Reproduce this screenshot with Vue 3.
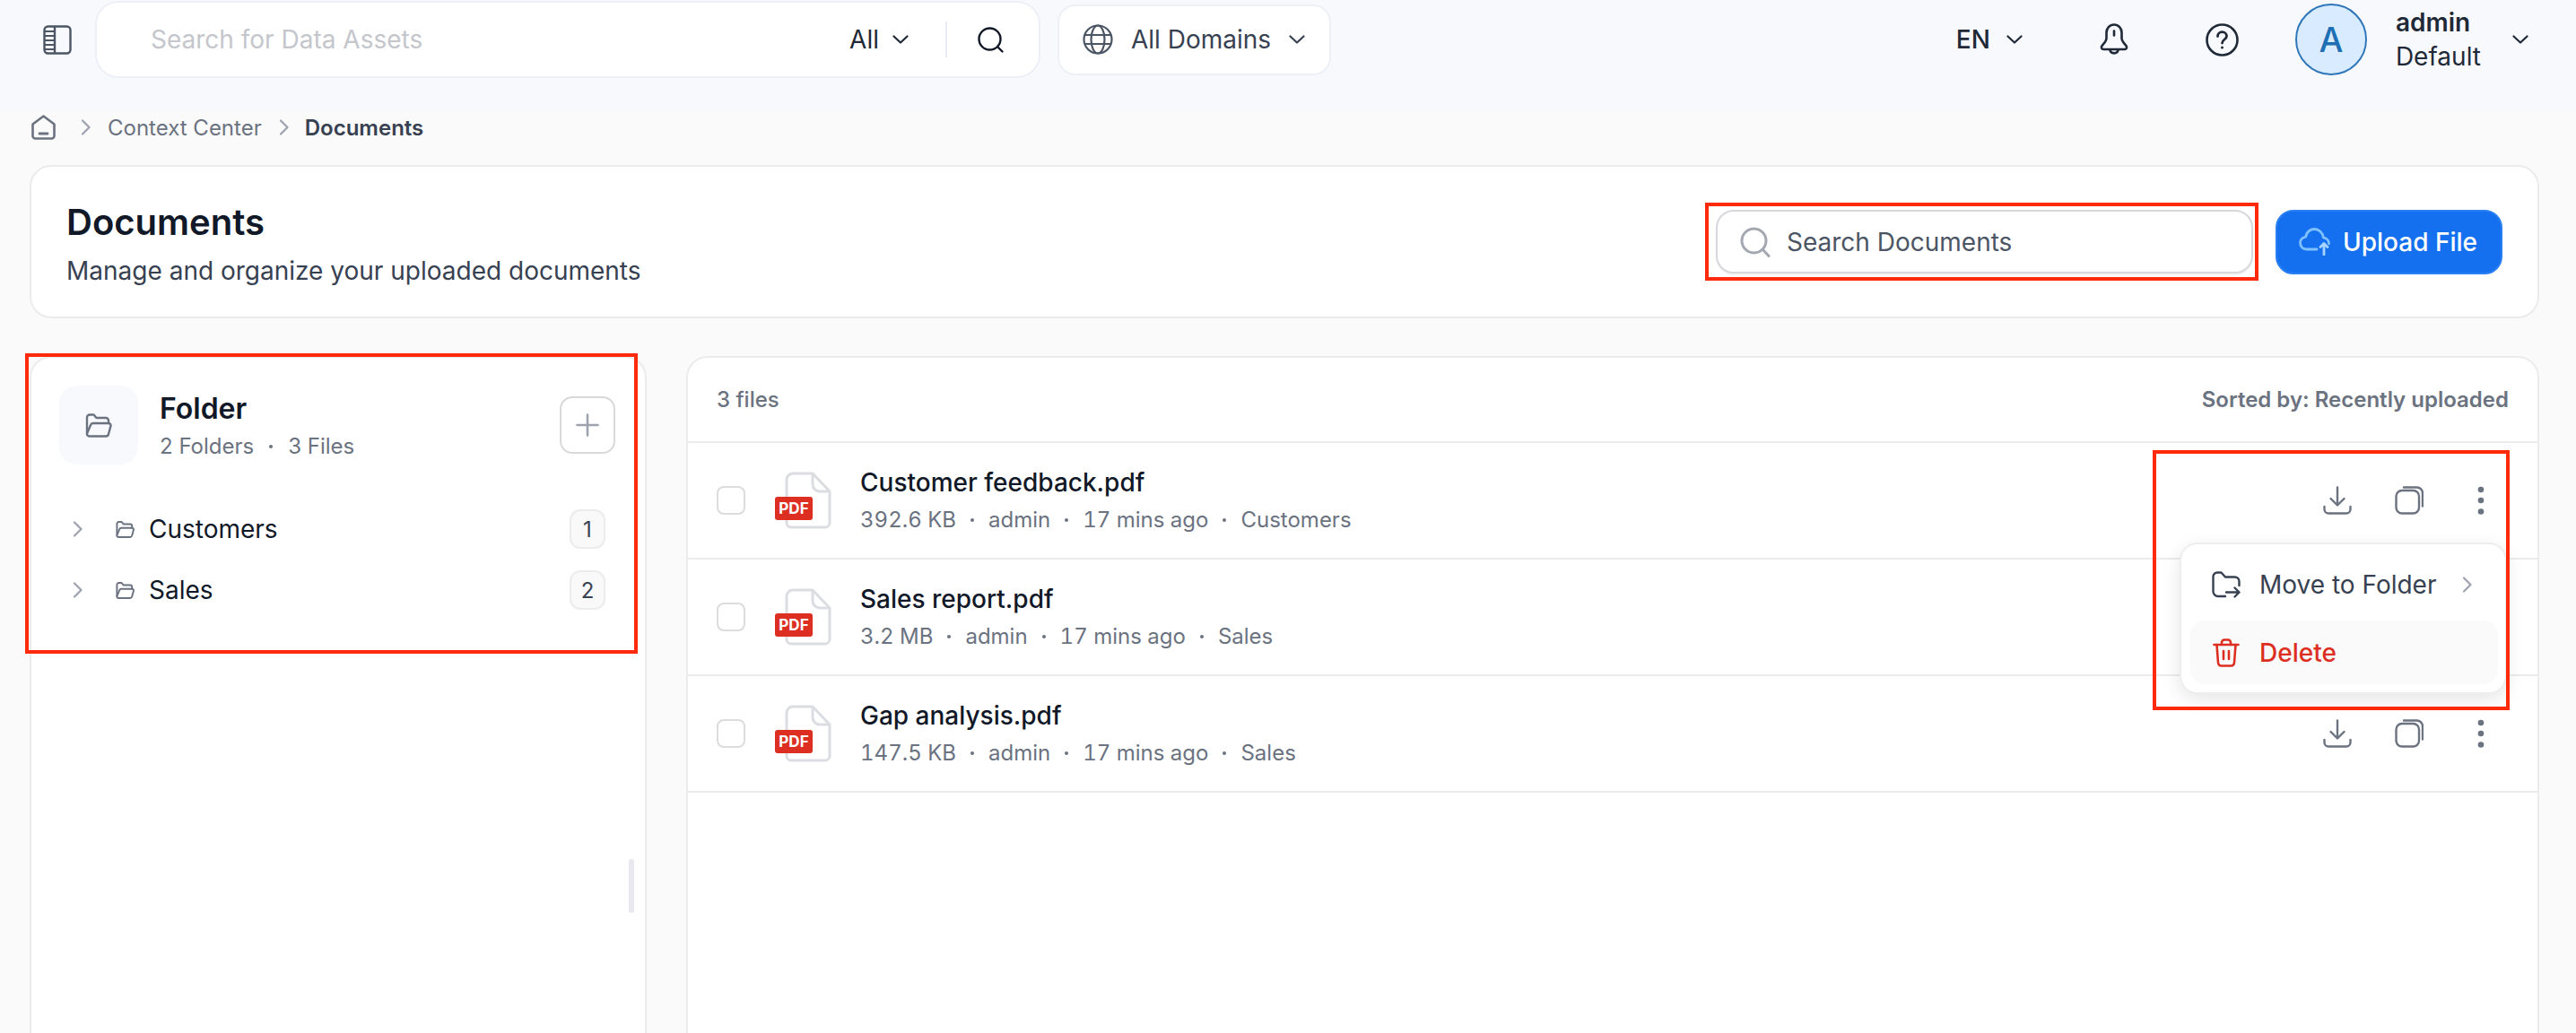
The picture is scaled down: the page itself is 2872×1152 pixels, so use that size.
<script setup>
import { ref } from 'vue';

const folders = ref([
  { name: 'Customers', count: 1 },
  { name: 'Sales', count: 2 }
]);

const files = ref([
  { name: 'Customer feedback.pdf', meta: ['392.6 KB', 'admin', '17 mins ago', 'Customers'] },
  { name: 'Sales report.pdf', meta: ['3.2 MB', 'admin', '17 mins ago', 'Sales'] },
  { name: 'Gap analysis.pdf', meta: ['147.5 KB', 'admin', '17 mins ago', 'Sales'] }
]);
</script>

<template>
  <div class="page">
    <!-- top bar -->
    <header class="topbar">
      <svg class="ic-sidebar" width="32" height="33" viewBox="0 0 32 33" fill="none" stroke="#4b5563" stroke-width="2.4">
        <rect x="1.5" y="1.5" width="29" height="30" rx="4" />
        <path d="M13 2v29" />
        <path d="M2 7h10M2 12h10M2 17h10M2 22h10M2 27h10" stroke-width="1.8" />
      </svg>

      <div class="global-search">
        <span class="global-placeholder">Search for Data Assets</span>
        <span class="scope">All</span>
        <svg class="chev-all" width="18" height="10" viewBox="0 0 18 10" fill="none" stroke="#1f2937" stroke-width="2.2" stroke-linecap="round" stroke-linejoin="round"><path d="M1.5 1.5 9 8.5l7.5-7" /></svg>
        <i class="divider"></i>
        <svg class="ic-search" width="29" height="29" viewBox="0 0 29 29" fill="none" stroke="#111827" stroke-width="2.4" stroke-linecap="round"><circle cx="13.5" cy="13.5" r="12" /><path d="m23 23 4.5 4.5" /></svg>
      </div>

      <div class="domains">
        <svg width="34" height="34" viewBox="0 0 34 34" fill="none" stroke="#4b5563" stroke-width="2.2">
          <circle cx="17" cy="17" r="15.5" />
          <ellipse cx="17" cy="17" rx="7.5" ry="15.5" />
          <path d="M2.5 12h29M2.5 22h29" />
        </svg>
        <span>All Domains</span>
        <svg width="18" height="10" viewBox="0 0 18 10" fill="none" stroke="#374151" stroke-width="2.2" stroke-linecap="round" stroke-linejoin="round"><path d="M1.5 1.5 9 8.5l7.5-7" /></svg>
      </div>

      <div class="top-right">
        <span class="lang">EN</span>
        <svg class="chev-lang" width="18" height="10" viewBox="0 0 18 10" fill="none" stroke="#1f2937" stroke-width="2.2" stroke-linecap="round" stroke-linejoin="round"><path d="M1.5 1.5 9 8.5l7.5-7" /></svg>
        <svg class="ic-bell" width="32" height="36" viewBox="0 0 32 36" fill="none" stroke="#1f2937" stroke-width="2.6" stroke-linecap="round" stroke-linejoin="round">
          <path d="M16 1.500c-5 0-8.500 4-8.500 9v6c0 3.500-2.500 5.500-5 8.500-1.300 1.700-.3 4 1.700 4h23.600c2 0 3-2.300 1.700-4-2.500-3-5-5-5-8.500v-6c0-5-3.500-9-8.500-9z" />
          <path d="M16 8.500v5" />
          <path d="M11.500 30c1 4.500 8 4.500 9 0" />
        </svg>
        <svg class="ic-help" width="37" height="37" viewBox="0 0 37 37" fill="none" stroke="#1f2937" stroke-width="2.6" stroke-linecap="round">
          <circle cx="18.500" cy="18.500" r="17" />
          <path d="M13.500 14.500c0-3 2.200-4.800 5-4.800s5 1.800 5 4.500c0 3.800-5 3.800-5 7.800" stroke-width="2.8" />
          <circle cx="18.500" cy="27" r="1.500" fill="#1f2937" stroke="none" />
        </svg>
        <div class="avatar">A</div>
        <div class="user">
          <span class="user-name">admin</span>
          <span class="user-org">Default</span>
        </div>
        <svg width="18" height="10" viewBox="0 0 18 10" fill="none" stroke="#1f2937" stroke-width="2.2" stroke-linecap="round" stroke-linejoin="round"><path d="M1.5 1.5 9 8.5l7.5-7" /></svg>
      </div>
    </header>

    <!-- breadcrumb -->
    <nav class="crumbs">
      <svg width="27" height="28" viewBox="0 0 27 28" fill="none" stroke="#6b7280" stroke-width="2.6" stroke-linecap="round" stroke-linejoin="round">
        <path d="M13.500 1.500 25.500 10.500V23.500a3 3 0 0 1-3 3H4.500a3 3 0 0 1-3-3V10.500z" />
        <path d="M9 21h9" stroke-width="2.800" />
      </svg>
      <svg class="crumb-chev first" width="11" height="18" viewBox="0 0 11 18" fill="none" stroke="#9ca3af" stroke-width="2.2" stroke-linecap="round" stroke-linejoin="round"><path d="m2 1.500 7.500 7.500L2 16.500" /></svg>
      <span class="crumb">Context Center</span>
      <svg class="crumb-chev" width="11" height="18" viewBox="0 0 11 18" fill="none" stroke="#9ca3af" stroke-width="2.2" stroke-linecap="round" stroke-linejoin="round"><path d="m2 1.500 7.500 7.500L2 16.500" /></svg>
      <span class="crumb current">Documents</span>
    </nav>

    <!-- page head -->
    <section class="head-card">
      <div class="head-text">
        <h1>Documents</h1>
        <p>Manage and organize your uploaded documents</p>
      </div>
      <div class="doc-search">
        <svg width="34" height="34" viewBox="0 0 34 34" fill="none" stroke="#a3a7b0" stroke-width="3" stroke-linecap="round"><circle cx="15.500" cy="15.500" r="13.500" /><path d="m26 26 6 6.500" /></svg>
        <span>Search Documents</span>
      </div>
      <div class="upload">
        <svg width="36" height="31" viewBox="0 0 36 31" fill="none" stroke="#80c2ff" stroke-width="2.800" stroke-linecap="round" stroke-linejoin="round">
          <path d="M20 24H8.500C4.500 24 1.500 21 1.500 17c0-3.500 2.500-6.200 6-6.800C8.500 5 12.500 1.500 17 1.500c5.500 0 9.800 4 10.300 9.300 3.500.6 6.200 3.500 6.200 7" />
          <path d="M28 30V18M24 21.500l4-4 4 4" stroke="#a8d5ff" />
        </svg>
        <span>Upload File</span>
      </div>
    </section>

    <div class="panels">
      <!-- folder tree -->
      <aside class="folders">
        <div class="folders-head">
          <div class="folder-tile">
            <svg width="30" height="27" viewBox="0 0 30 27" fill="none" stroke="#6b7280" stroke-width="2.400" stroke-linecap="round" stroke-linejoin="round">
              <path d="M2 22V4.500a3 3 0 0 1 3-3h4.500l3 3.500H23a3 3 0 0 1 3 3v3" />
              <path d="M2 22.500 6 13a3 3 0 0 1 2.800-2H26a2.500 2.500 0 0 1 2.400 3.200L26 23a3 3 0 0 1-2.800 2.500H4.500A2.500 2.500 0 0 1 2 22.500z" />
            </svg>
          </div>
          <div class="folders-title">
            <strong>Folder</strong>
            <span>2 Folders<b class="dot folder-dot"></b>3 Files</span>
          </div>
          <div class="add-btn">
            <svg width="26" height="26" viewBox="0 0 26 26" fill="none" stroke="#9ca3af" stroke-width="2.600" stroke-linecap="round"><path d="M13 1.500v23M1.500 13h23" /></svg>
          </div>
        </div>
        <ul class="tree">
          <li v-for="folder in folders" :key="folder.name">
            <svg class="tree-chev" width="11" height="18" viewBox="0 0 11 18" fill="none" stroke="#9ca3af" stroke-width="2.200" stroke-linecap="round" stroke-linejoin="round"><path d="m2 1.500 7.500 7.500L2 16.500" /></svg>
            <svg class="tree-folder" width="21" height="19" viewBox="0 0 30 27" fill="none" stroke="#6b7280" stroke-width="2.800" stroke-linecap="round" stroke-linejoin="round">
              <path d="M2 22V4.500a3 3 0 0 1 3-3h4.500l3 3.500H23a3 3 0 0 1 3 3v3" />
              <path d="M2 22.500 6 13a3 3 0 0 1 2.800-2H26a2.500 2.500 0 0 1 2.400 3.200L26 23a3 3 0 0 1-2.800 2.500H4.500A2.500 2.500 0 0 1 2 22.500z" />
            </svg>
            <span class="tree-name">{{ folder.name }}</span>
            <span class="count">{{ folder.count }}</span>
          </li>
        </ul>
        <i class="thumb"></i>
      </aside>

      <!-- file list -->
      <main class="files">
        <div class="files-head">
          <span class="files-count">3 files</span>
          <span class="files-sort">Sorted by: Recently uploaded</span>
        </div>
        <div v-for="file in files" :key="file.name" class="file-row">
          <i class="check"></i>
          <div class="pdf">
            <svg width="52" height="64" viewBox="0 0 52 64" fill="none" stroke="#dcdde2" stroke-width="3" stroke-linejoin="round">
              <path d="M9 2h22l19 20v35a5 5 0 0 1-5 5H7a5 5 0 0 1-5-5V9a7 7 0 0 1 7-7z" />
              <path d="M31 2v12a8 8 0 0 0 8 8h11" />
            </svg>
            <span class="pdf-badge">PDF</span>
          </div>
          <div class="file-text">
            <div class="file-name">{{ file.name }}</div>
            <div class="file-meta">
              <template v-for="(part, i) in file.meta" :key="i">
                <b v-if="i > 0" class="dot"></b>
                <span>{{ part }}</span>
              </template>
            </div>
          </div>
          <div class="file-actions">
            <svg width="32" height="32" viewBox="0 0 32 32" fill="none" stroke="#6b7280" stroke-width="2.400" stroke-linecap="round" stroke-linejoin="round">
              <path d="M16 1.500V21M8.500 14l7.500 7.500 7.500-7.500" />
              <path d="M1.500 23v3a4.500 4.500 0 0 0 4.500 4.500h20a4.500 4.500 0 0 0 4.500-4.500v-3" />
            </svg>
            <svg width="32" height="32" viewBox="0 0 32 32" fill="none" stroke="#6b7280" stroke-width="2.400" stroke-linecap="round" stroke-linejoin="round">
              <rect x="1.500" y="5" width="25.500" height="25.500" rx="6.500" />
              <path d="M10 1.500h14.500a6.500 6.500 0 0 1 6.500 6.500v14.500" />
            </svg>
            <svg width="32" height="32" viewBox="0 0 32 32" fill="#6b7280">
              <circle cx="16" cy="4" r="3.300" />
              <circle cx="16" cy="16" r="3.300" />
              <circle cx="16" cy="28.500" r="3.300" />
            </svg>
          </div>
        </div>

        <div class="menu">
          <div class="menu-item">
            <svg width="32" height="30" viewBox="0 0 32 30" fill="none" stroke="#374151" stroke-width="2.400" stroke-linecap="round" stroke-linejoin="round">
              <path d="M15 28H7a5.500 5.500 0 0 1-5.500-5.500V6A4.500 4.500 0 0 1 6 1.500h4.500L15 6.500h10.500a5 5 0 0 1 5 5V16" />
              <path d="M16 23.500h14.500M25.500 18.500l5 5-5 5" />
            </svg>
            <span>Move to Folder</span>
            <svg class="menu-chev" width="11" height="18" viewBox="0 0 11 18" fill="none" stroke="#9ca3af" stroke-width="2.200" stroke-linecap="round" stroke-linejoin="round"><path d="m2 1.500 7.500 7.500L2 16.500" /></svg>
          </div>
          <div class="menu-item danger">
            <svg width="32" height="32" viewBox="0 0 32 32" fill="none" stroke="#dc2f22" stroke-width="2.600" stroke-linecap="round" stroke-linejoin="round">
              <path d="M2.500 7h27" />
              <path d="M11 7V4.500a3 3 0 0 1 3-3h4a3 3 0 0 1 3 3V7" />
              <path d="M5.500 7l1.500 20a3.500 3.500 0 0 0 3.500 3.500h11a3.500 3.500 0 0 0 3.500-3.500L26.500 7" />
              <path d="M13 14v9M19 14v9" />
            </svg>
            <span>Delete</span>
          </div>
        </div>
      </main>
    </div>

    <!-- red annotation frames -->
    <i class="mark mark-search"></i>
    <i class="mark mark-folders"></i>
    <i class="mark mark-menu"></i>
  </div>
</template>

<style scoped>
* {
  box-sizing: border-box;
  margin: 0;
  padding: 0;
}

.page {
  position: relative;
  width: 2872px;
  height: 1152px;
  overflow: hidden;
  background: #fafafa;
  font-family: Inter, "Liberation Sans", sans-serif;
  color: #111827;
}

/* top bar */
.topbar {
  display: flex;
  align-items: center;
  height: 124px;
  padding: 0 53px 36px 48px;
  background: #f8f9fd;
}

.ic-sidebar {
  flex: none;
}

.global-search {
  display: flex;
  align-items: center;
  width: 1054px;
  height: 86px;
  margin-left: 26px;
  padding: 0 39px 0 60px;
  background: #fff;
  border: 2px solid #eef0f8;
  border-radius: 26px;
}

.global-placeholder {
  flex: 1;
  font-size: 28px;
  color: #c4c6cc;
}

.scope {
  font-size: 28px;
  color: #1f2937;
}

.chev-all {
  margin-left: 15px;
}

.divider {
  width: 2px;
  height: 40px;
  margin: 0 34px 0 41px;
  background: #e8eaf4;
}

.domains {
  display: flex;
  align-items: center;
  width: 305px;
  height: 79px;
  margin-left: 19px;
  padding-left: 26px;
  background: #fff;
  border: 2px solid #eef0f8;
  border-radius: 20px;
  font-size: 28px;
  color: #374151;
}

.domains span {
  margin: 0 20px;
}

.top-right {
  display: flex;
  align-items: center;
  margin-left: auto;
}

.lang {
  font-size: 28px;
  font-weight: 500;
  color: #1f2937;
}

.chev-lang {
  margin-left: 18px;
}

.ic-bell {
  margin-left: 86px;
}

.ic-help {
  margin-left: 86px;
}

.avatar {
  display: flex;
  align-items: center;
  justify-content: center;
  width: 80px;
  height: 80px;
  margin-left: 63px;
  border: 2px solid #2f76b8;
  border-radius: 50%;
  background: #d9ecff;
  color: #1f6fb5;
  font-size: 38px;
  font-weight: 500;
}

.user {
  display: flex;
  flex-direction: column;
  gap: 4px;
  margin: 0 35px 0 32px;
  font-size: 28px;
  line-height: 34px;
  color: #1f2937;
}

.user-name {
  font-weight: 600;
}

/* breadcrumb */
.crumbs {
  display: flex;
  align-items: center;
  height: 36px;
  padding-left: 35px;
}

.crumb-chev {
  margin: 0 18px 0 19px;
}

.crumb-chev.first {
  margin: 0 19px 0 28px;
}

.crumb {
  font-size: 24px;
  color: #6b7280;
}

.crumb.current {
  font-weight: 600;
  color: #374151;
}

/* page head */
.head-card {
  display: flex;
  align-items: center;
  width: 2798px;
  height: 171px;
  margin: 24px 0 0 33px;
  padding: 0 39px 0 39px;
  background: #fff;
  border: 2px solid #ebebeb;
  border-radius: 24px;
}

.head-text {
  flex: 1;
  padding-top: 5px;
}

h1 {
  font-size: 40px;
  font-weight: 600;
  line-height: 48px;
  color: #111827;
}

.head-text p {
  margin-top: 12px;
  font-size: 28px;
  line-height: 36px;
  color: #374151;
}

.doc-search {
  display: flex;
  align-items: center;
  gap: 18px;
  width: 599px;
  height: 71px;
  padding-left: 25px;
  background: #fff;
  border: 2px solid #d8d8dc;
  border-radius: 20px;
  box-shadow: 0 2px 2px rgba(0, 0, 0, 0.06);
  font-size: 28px;
  color: #4b5563;
}

.upload {
  display: flex;
  align-items: center;
  gap: 13px;
  width: 253px;
  height: 72px;
  margin-left: 25px;
  padding-left: 24px;
  background: #1570ef;
  border: 2px solid #2a7ff2;
  border-radius: 20px;
  font-size: 28px;
  font-weight: 500;
  color: #fff;
}

/* two columns */
.panels {
  display: flex;
  gap: 44px;
  width: 2798px;
  height: 840px;
  margin: 42px 0 0 33px;
}

.folders {
  position: relative;
  flex: none;
  width: 688px;
  padding: 31px 33px 0 31px;
  background: #fff;
  border: 2px solid #ebebeb;
  border-radius: 24px;
}

.folders-head {
  display: flex;
  align-items: center;
  height: 88px;
}

.folder-tile {
  display: flex;
  align-items: center;
  justify-content: center;
  width: 88px;
  height: 88px;
  background: #f8f9fd;
  border-radius: 20px;
}

.folders-title {
  display: flex;
  flex: 1;
  flex-direction: column;
  gap: 9px;
  margin-left: 24px;
}

.folders-title strong {
  font-size: 32px;
  font-weight: 600;
  line-height: 38px;
  color: #111827;
}

.folders-title span {
  display: flex;
  align-items: center;
  font-size: 24px;
  line-height: 28px;
  color: #6b7280;
}

.add-btn {
  display: flex;
  align-items: center;
  justify-content: center;
  width: 62px;
  height: 64px;
  border: 2px solid #d9d9dc;
  border-radius: 14px;
}

.tree {
  margin-top: 38px;
  padding: 0 11px 0 15px;
  list-style: none;
}

.tree li {
  display: flex;
  align-items: center;
  height: 68px;
}

.tree-folder {
  margin-left: 37px;
}

.tree-name {
  flex: 1;
  margin-left: 16px;
  font-size: 28px;
  color: #111827;
}

.count {
  display: flex;
  align-items: center;
  justify-content: center;
  width: 40px;
  height: 44px;
  background: #f9f9fa;
  border: 2px solid #ececec;
  border-radius: 12px;
  font-size: 24px;
  color: #374151;
}

.thumb {
  position: absolute;
  top: 559px;
  right: 12px;
  width: 6px;
  height: 60px;
  border-radius: 3px;
  background: #e8e8ee;
}

/* files */
.files {
  position: relative;
  flex: 1;
  background: #fff;
  border: 2px solid #ebebeb;
  border-radius: 24px;
}

.files-head {
  display: flex;
  align-items: center;
  justify-content: space-between;
  height: 95px;
  padding: 0 32px;
  border-bottom: 2px solid #ebebeb;
  font-size: 24px;
  font-weight: 500;
  color: #6b7280;
}

.files-sort {
  font-weight: 600;
}

.file-row {
  display: flex;
  align-items: center;
  height: 130px;
  padding: 0 47px 0 32px;
  border-bottom: 2px solid #ebebeb;
}

.check {
  flex: none;
  width: 32px;
  height: 32px;
  border: 2px solid #dcdcdf;
  border-radius: 8px;
}

.pdf {
  position: relative;
  flex: none;
  display: flex;
  justify-content: flex-end;
  width: 63px;
  margin-left: 33px;
}

.pdf svg {
  display: block;
}

.pdf-badge {
  position: absolute;
  left: 0;
  top: 28px;
  width: 42px;
  height: 26px;
  border-radius: 3px;
  background: #dc2f22;
  color: #fff;
  font-size: 17px;
  font-weight: 700;
  line-height: 26px;
  text-align: center;
}

.file-text {
  flex: 1;
  margin-left: 32px;
}

.file-name {
  font-size: 28px;
  font-weight: 500;
  line-height: 40px;
  color: #111827;
}

.file-meta {
  display: flex;
  align-items: center;
  margin-top: 4px;
  font-size: 24px;
  line-height: 36px;
  font-variant-numeric: tabular-nums;
  color: #6b7280;
}

.dot {
  display: inline-block;
  width: 4px;
  height: 4px;
  margin: 0 16px;
  border-radius: 50%;
  background: #6b7280;
}

.folder-dot {
  margin: 0 17px;
}

.file-actions {
  display: flex;
  gap: 48px;
}

/* row menu */
.menu {
  position: absolute;
  top: 206px;
  right: 34px;
  display: flex;
  flex-direction: column;
  gap: 5px;
  width: 365px;
  height: 169px;
  padding: 9px 8px 9px 10px;
  background: #fff;
  border: 2px solid #eeeeee;
  border-radius: 20px;
  box-shadow: 0 6px 20px rgba(0, 0, 0, 0.1);
}

.menu-item {
  display: flex;
  align-items: center;
  gap: 21px;
  height: 71px;
  padding-left: 24px;
  border-radius: 16px;
  font-size: 28px;
  color: #374151;
}

.menu-chev {
  margin-left: 8px;
}

.menu-item.danger {
  background: #fafafa;
  color: #dc2f22;
  font-weight: 500;
}

/* red frames drawn over the page */
.mark {
  position: absolute;
  border: 4px solid #ff2a0a;
  pointer-events: none;
}

.mark-search {
  top: 226px;
  left: 1901px;
  width: 617px;
  height: 87px;
}

.mark-folders {
  top: 394px;
  left: 28px;
  width: 683px;
  height: 335px;
}

.mark-menu {
  top: 502px;
  left: 2400px;
  width: 398px;
  height: 290px;
}
</style>
